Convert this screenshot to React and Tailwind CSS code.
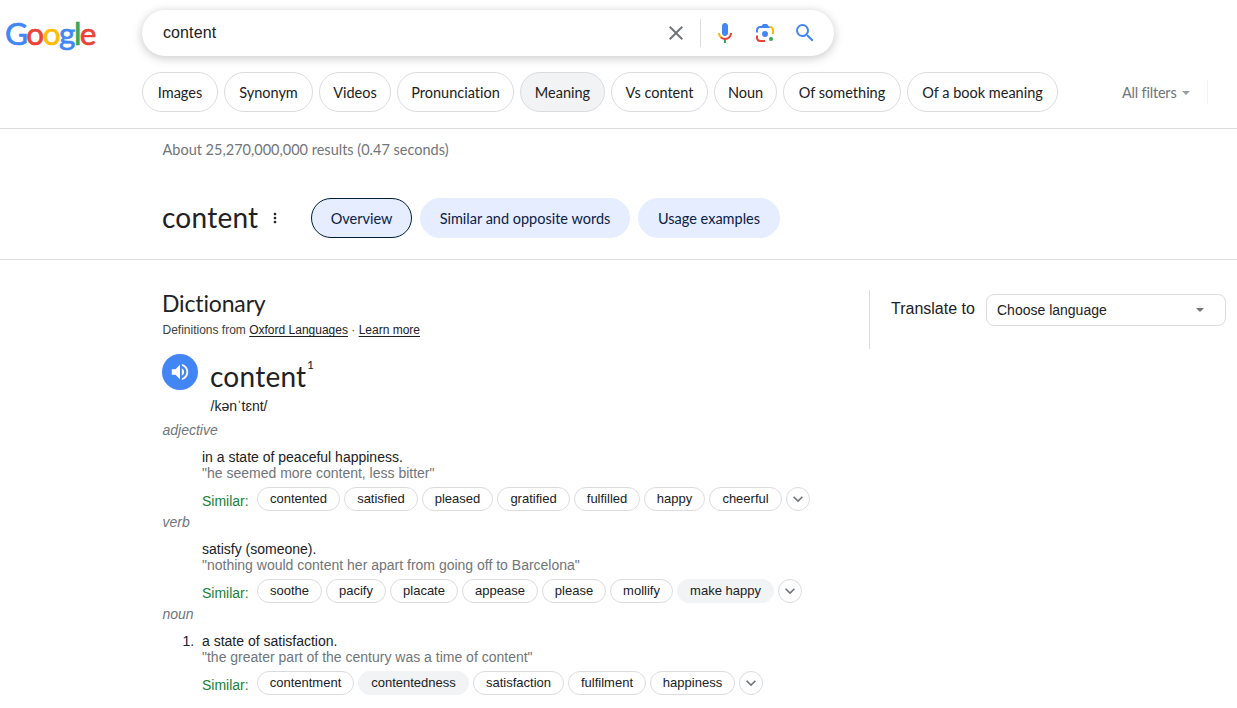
import React from 'react';
import clsx from 'clsx';

const filters = [
  { label: 'Images', width: 'w-[76px]' },
  { label: 'Synonym', width: 'w-[89px]' },
  { label: 'Videos', width: 'w-[72px]' },
  { label: 'Pronunciation', width: 'w-[117px]' },
  { label: 'Meaning', width: 'w-[85px]', active: true },
  { label: 'Vs content', width: 'w-[97px]' },
  { label: 'Noun', width: 'w-[63px]' },
  { label: 'Of something', width: 'w-[118px]' },
  { label: 'Of a book meaning', width: 'w-[151px]' },
];

const tabs = [
  { label: 'Overview', width: 'w-[101px]', active: true },
  { label: 'Similar and opposite words', width: 'w-[210px]' },
  { label: 'Usage examples', width: 'w-[142px]' },
];

const entries = [
  {
    type: 'adjective',
    meaning: 'in a state of peaceful happiness.',
    example: '"he seemed more content, less bitter"',
    similar: [
      { word: 'contented', width: 'w-[83px]' },
      { word: 'satisfied', width: 'w-[74px]' },
      { word: 'pleased', width: 'w-[71px]' },
      { word: 'gratified', width: 'w-[73px]' },
      { word: 'fulfilled', width: 'w-[66px]' },
      { word: 'happy', width: 'w-[61px]' },
      { word: 'cheerful', width: 'w-[73px]' },
    ],
  },
  {
    type: 'verb',
    meaning: 'satisfy (someone).',
    example: '"nothing would content her apart from going off to Barcelona"',
    similar: [
      { word: 'soothe', width: 'w-[65px]' },
      { word: 'pacify', width: 'w-[60px]' },
      { word: 'placate', width: 'w-[68px]' },
      { word: 'appease', width: 'w-[76px]' },
      { word: 'please', width: 'w-[64px]' },
      { word: 'mollify', width: 'w-[63px]' },
      { word: 'make happy', width: 'w-[97px]', plain: true },
    ],
  },
  {
    type: 'noun',
    number: '1.',
    meaning: 'a state of satisfaction.',
    example: '"the greater part of the century was a time of content"',
    similar: [
      { word: 'contentment', width: 'w-[97px]' },
      { word: 'contentedness', width: 'w-[111px]', plain: true },
      { word: 'satisfaction', width: 'w-[91px]' },
      { word: 'fulfilment', width: 'w-[78px]' },
      { word: 'happiness', width: 'w-[85px]' },
    ],
  },
];

const Logo = () => (
  <div className="mt-[13px] ml-[5px] h-10 w-[92px] text-[31.5px] leading-10 tracking-[-1.5px] whitespace-nowrap font-['Lato',sans-serif] [-webkit-text-stroke:0.7px]">
    <span className="text-[#4285f4]">G</span>
    <span className="text-[#ea4335]">o</span>
    <span className="text-[#fbbc05]">o</span>
    <span className="text-[#4285f4]">g</span>
    <span className="text-[#34a853]">l</span>
    <span className="text-[#ea4335]">e</span>
  </div>
);

const ClearIcon = () => (
  <svg width="24" height="24" viewBox="0 0 24 24" fill="#70757a">
    <path d="M19 6.41L17.59 5 12 10.59 6.41 5 5 6.41 10.59 12 5 17.59 6.41 19 12 13.41 17.59 19 19 17.59 13.41 12z" />
  </svg>
);

const MicIcon = () => (
  <svg width="24" height="24" viewBox="0 0 24 24">
    <path fill="#4285f4" d="M12 15c1.66 0 3-1.31 3-2.97v-7.02c0-1.66-1.34-3.01-3-3.01s-3 1.34-3 3.01v7.02c0 1.66 1.34 2.97 3 2.97z" />
    <path fill="#34a853" d="M11 18.08h2v3.92h-2z" />
    <path fill="#fbbc04" d="M7.05 16.87c-1.27-1.33-2.05-2.83-2.05-4.87h2c0 1.45.56 2.42 1.47 3.38v.32l-1.15 1.18z" />
    <path fill="#ea4335" d="M12 16.93a4.97 5.25 0 0 1-3.54-1.55l-1.41 1.49c1.26 1.34 3.02 2.13 4.95 2.13 3.87 0 6.99-2.92 6.99-7h-1.99c0 2.92-2.24 4.93-5 4.93z" />
  </svg>
);

const LensIcon = () => (
  <svg width="24" height="24" viewBox="0 0 192 192">
    <circle fill="#34a853" cx="144.07" cy="144" r="16" />
    <circle fill="#4285f4" cx="96.07" cy="104" r="24" />
    <path fill="#ea4335" d="M24 135.2c0 18.11 14.69 32.8 32.8 32.8H96v-16l-40.1-.1c-8.8 0-15.9-8.19-15.9-17.9v-18H24v19.2z" />
    <path fill="#fbbc04" d="M168 72.8c0-18.11-14.69-32.8-32.8-32.8H116l20 16c8.8 0 16 8.29 16 18v30h16V72.8z" />
    <path fill="#4285f4" d="M112 24H80L68 40H56.8C38.69 40 24 54.69 24 72.8V92h16V74c0-9.71 7.2-18 16-18h80l-24-32z" />
  </svg>
);

const SearchIcon = () => (
  <svg width="24" height="24" viewBox="0 0 24 24" fill="#4285f4">
    <path d="M15.5 14h-.79l-.28-.27A6.471 6.471 0 0 0 16 9.5 6.5 6.5 0 1 0 9.5 16c1.61 0 3.09-.59 4.23-1.57l.27.28v.79l5 4.99L20.49 19l-4.99-5zm-6 0C7.01 14 5 11.99 5 9.5S7.01 5 9.5 5 14 7.01 14 9.5 11.99 14 9.5 14z" />
  </svg>
);

const SpeakerIcon = () => (
  <svg width="22" height="22" viewBox="0 0 24 24" fill="#fff">
    <path d="M3 9v6h4l5 5V4L7 9H3zm13.5 3c0-1.77-1.02-3.29-2.5-4.03v8.05c1.48-.73 2.5-2.25 2.5-4.02zM14 3.23v2.06c2.89.86 5 3.54 5 6.71s-2.11 5.85-5 6.71v2.06c4.01-.91 7-4.49 7-8.77s-2.99-7.86-7-8.77z" />
  </svg>
);

const MoreIcon = () => (
  <svg width="16" height="16" viewBox="0 0 24 24" fill="#202124">
    <path d="M12 8c1.1 0 2-.9 2-2s-.9-2-2-2-2 .9-2 2 .9 2 2 2zm0 2c-1.1 0-2 .9-2 2s.9 2 2 2 2-.9 2-2-.9-2-2-2zm0 6c-1.1 0-2 .9-2 2s.9 2 2 2 2-.9 2-2-.9-2-2-2z" />
  </svg>
);

const ExpandIcon = () => (
  <svg className="shrink-0" width="20" height="20" viewBox="0 0 24 24" fill="#70757a">
    <path d="M16.59 8.59L12 13.17 7.41 8.59 6 10l6 6 6-6z" />
  </svg>
);

const SearchBar = () => (
  <div className="ml-[45px] mt-2.5 flex h-[46px] w-[692px] items-center rounded-full bg-white pl-[21px] shadow-[0_2px_8px_1px_rgba(64,60,67,0.24)]">
    <span className="flex-1 text-base tracking-[0.1px] text-[#202124]">content</span>
    <ClearIcon />
    <div className="ml-3 h-7 w-px bg-[#dadce0]" />
    <div className="ml-3 mr-[17px] flex gap-4">
      <MicIcon />
      <LensIcon />
      <SearchIcon />
    </div>
  </div>
);

const Similar = ({ words }) => (
  <div className="mt-1.5 flex h-6 items-start">
    <span className="mt-1.5 w-[55px] text-sm leading-4 text-[#188038]">Similar:</span>
    <div className="flex gap-1">
      {words.map((item) => (
        <button
          key={item.word}
          className={clsx(
            'flex h-6 items-center justify-center rounded-full border pb-px text-[13px] whitespace-nowrap text-[#202124]',
            item.width,
            item.plain ? 'border-[#f1f3f4] bg-[#f1f3f4]' : 'border-[#dadce0]'
          )}
        >
          {item.word}
        </button>
      ))}
      <button className="flex size-6 items-center justify-center rounded-full border border-[#dadce0]">
        <ExpandIcon />
      </button>
    </div>
  </div>
);

const Entry = ({ entry }) => (
  <div className="h-[92px]">
    <div className="h-[27px] pl-[0.5px] text-sm leading-4 text-[#70757a] italic">{entry.type}</div>
    <div className="flex text-sm leading-4">
      <div className="w-10 pl-[20.5px] text-[#202124]">{entry.number}</div>
      <div>
        <div className="text-[#202124]">{entry.meaning}</div>
        <div className="text-[#70757a]">{entry.example}</div>
        <Similar words={entry.similar} />
      </div>
    </div>
  </div>
);

const App = () => {
  return (
    <div className="h-[708px] w-[1237px] overflow-hidden bg-white font-['Liberation_Sans',Arial,sans-serif] [font-variant-ligatures:none]">
      <header className="h-[129px] border-b border-[#dadce0]">
        <div className="flex h-[72px]">
          <Logo />
          <SearchBar />
        </div>
        <div className="flex items-center pl-[142px] font-['Lato',sans-serif] text-[14.5px]">
          <div className="flex gap-1.5">
            {filters.map((f) => (
              <button
                key={f.label}
                className={clsx(
                  'h-10 rounded-[20px] border border-[#dadce0] pt-px whitespace-nowrap text-[#202124]',
                  f.width,
                  f.active && 'bg-[#f1f3f4]'
                )}
              >
                {f.label}
              </button>
            ))}
          </div>
          <div className="ml-16 flex w-[85px] items-center gap-[6px] pt-px text-[#70757a]">
            <span className="w-[54px] tracking-[-0.2px] whitespace-nowrap">All filters</span>
            <svg width="8" height="4" viewBox="0 0 8 4" fill="#9aa0a6"><path d="M0 0h8L4 4z" /></svg>
          </div>
          <div className="h-6 w-px bg-[#f1f3f4]" />
        </div>
      </header>

      <section className="h-[131px] border-b border-[#dadce0] pl-[162px]">
        <div className="h-[69px] pt-[11px] pl-[0.5px] font-['Lato',sans-serif] text-[14.5px] leading-5 text-[#70757a]">
          About 25,270,000,000 results (0.47 seconds)
        </div>
        <div className="flex h-10 items-center font-['Lato',sans-serif]">
          <h1 className="-mt-[3px] w-[105px] text-[28px] leading-10 tracking-[0.25px] text-[#202124]">content</h1>
          <MoreIcon />
          <div className="ml-7 flex gap-2">
            {tabs.map((tab) => (
              <button
                key={tab.label}
                className={clsx(
                  'h-10 rounded-[20px] border bg-[#e5edff] pt-px text-[14.5px] whitespace-nowrap text-[#0b2046]',
                  tab.width,
                  tab.active ? 'border-[#001d35]' : 'border-[#e5edff]'
                )}
              >
                {tab.label}
              </button>
            ))}
          </div>
        </div>
      </section>

      <main className="flex">
        <div className="w-[869px] pl-[162px]">
          <h2 className="mt-[27px] h-[33px] font-['Lato',sans-serif] text-[23px] leading-8 tracking-[-0.15px] text-[#202124]">Dictionary</h2>
          <div className="mt-0.5 h-4 pl-[0.5px] text-xs leading-4 whitespace-pre text-[#3c4043]">
            Definitions from <a className="text-[#202124] underline underline-offset-2">Oxford Languages</a> · <a className="text-[#202124] underline underline-offset-2">Learn more</a>
          </div>
          <div className="mt-4 flex h-[68px]">
            <button className="flex size-9 items-center justify-center rounded-full bg-[#4285f4]">
              <SpeakerIcon />
            </button>
            <div className="ml-3">
              <div className="flex h-11 font-['Lato',sans-serif] text-[#202124]">
                <span className="w-[97px] text-[28px] leading-[44px] tracking-[0.25px]">content</span>
                <span className="text-xs leading-[22px]">1</span>
              </div>
              <div className="pl-[0.5px] text-sm leading-4 text-[#202124]">/kənˈtɛnt/</div>
            </div>
          </div>
          <div>
            {entries.map((entry) => (
              <Entry key={entry.type} entry={entry} />
            ))}
          </div>
        </div>
        <aside className="mt-[30px] flex h-[59px] border-l border-[#dadce0] pl-[21px]">
          <span className="mt-[9px] w-[95px] text-base leading-5 whitespace-nowrap text-[#202124]">Translate to</span>
          <button className="mt-1 flex h-8 w-60 items-center justify-between rounded-lg border border-[#dadce0] pr-5 pl-2.5 text-sm text-[#202124]">
            Choose language
            <svg width="10" height="5" viewBox="0 0 10 5" fill="#70757a"><path d="M1 0h8L5 4z" /></svg>
          </button>
        </aside>
      </main>
    </div>
  );
};

export default App;
